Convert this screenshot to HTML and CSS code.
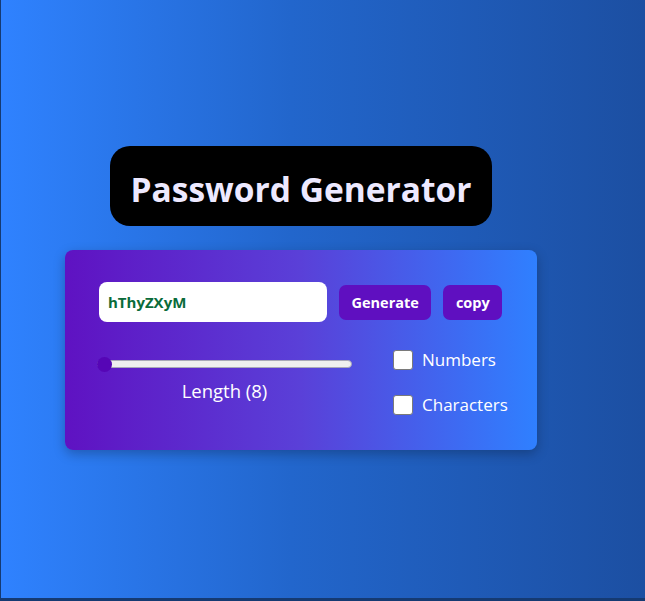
FILE: index.html
```html
<!DOCTYPE html>
<html lang="en">
<head>
<meta charset="utf-8">
<title>Password Generator</title>
<link rel="stylesheet" href="styles.css">
</head>
<body>
<div class="page">
  <div class="wrap">
    <h1 class="title">Password Generator</h1>
    <div class="card">
      <div class="row-top">
        <input class="pw" type="text" value="hThyZXyM" readonly>
        <button class="btn">Generate</button>
        <button class="btn">copy</button>
      </div>
      <div class="row-bottom">
        <div class="slider-col">
          <div class="range" role="slider" aria-valuemin="8" aria-valuemax="50" aria-valuenow="8">
            <span class="thumb"></span>
          </div>
          <label class="len">Length (8)</label>
        </div>
        <div class="checks">
          <label class="check"><input type="checkbox" class="box"><span>Numbers</span></label>
          <label class="check"><input type="checkbox" class="box"><span>Characters</span></label>
        </div>
      </div>
    </div>
  </div>
</div>
</body>
</html>
```
FILE: styles.css
```css
* { box-sizing: border-box; }
html, body { margin: 0; padding: 0; }
body {
  background: #153a72;
  font-family: "Open Sans", "Noto Sans", sans-serif;
  padding-left: 1px;
  height: 601px;
  overflow: hidden;
}
.page {
  height: 598px;
  background: linear-gradient(90deg, #2f82ff 0%, #2266cc 45%, #1c4fa2 100%);
  padding-top: 146px;
  padding-left: 64px;
}
.wrap {
  width: 472px;
  display: flex;
  flex-direction: column;
  align-items: center;
}
.title {
  margin: 0;
  background: #000;
  color: #ede9ff;
  font-size: 33.5px;
  font-weight: 700;
  line-height: 44px;
  padding: 21px 21px 15px 21px;
  border-radius: 20px;
}
.card {
  margin-top: 24px;
  width: 472px;
  height: 200px;
  border-radius: 8px;
  background: linear-gradient(90deg, #5f12c2 0%, #5a40d8 50%, #2f80ff 100%);
  box-shadow: 0 4px 12px rgba(0, 0, 0, 0.25);
  padding: 32px 34px 0 34px;
}
.row-top {
  display: flex;
  align-items: center;
  gap: 12px;
}
.pw {
  width: 228px;
  height: 40px;
  border: none;
  border-radius: 8px;
  background: #fff;
  padding: 0 9px;
  font-family: inherit;
  font-size: 15px;
  font-weight: 700;
  color: #0a6b3a;
  outline: none;
}
.btn {
  height: 35px;
  border: none;
  border-radius: 7px;
  background: #5f0fc0;
  color: #fff;
  font-family: inherit;
  font-size: 14.5px;
  font-weight: 700;
  padding: 0 12.5px;
}
.row-bottom {
  display: flex;
  margin-top: 28px;
}
.slider-col {
  width: 255px;
  margin-left: -2px;
  display: flex;
  flex-direction: column;
  align-items: center;
  padding-top: 10px;
}
.range {
  width: 255px;
  height: 8px;
  background: #efefef;
  border: 1px solid #a8a8b8;
  border-radius: 4px;
  display: flex;
  align-items: center;
}
.thumb {
  flex-shrink: 0;
  width: 15px;
  height: 15px;
  margin-left: -1px;
  border-radius: 50%;
  background: #5606b6;
}
.len {
  color: #fff;
  font-size: 18.5px;
  margin-top: 10px;
  line-height: 26px;
}
.checks {
  margin-left: 41px;
  display: flex;
  flex-direction: column;
  gap: 25px;
}
.check {
  display: flex;
  align-items: center;
  gap: 9px;
  color: #fff;
  font-size: 17px;
  line-height: 20px;
}
.box {
  -webkit-appearance: none;
  appearance: none;
  width: 20px;
  height: 20px;
  margin: 0;
  background: #fff;
  border: 1px solid #7a7a7a;
  border-radius: 3px;
}
```
